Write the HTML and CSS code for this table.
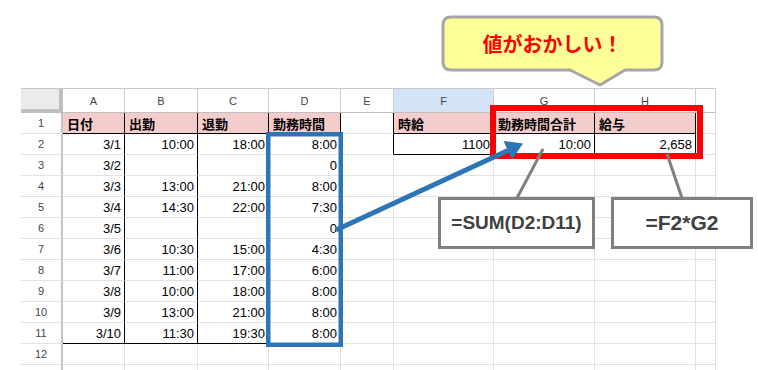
FILE: index.html
```html
<!DOCTYPE html>
<html lang="ja">
<head>
<meta charset="utf-8">
<title>勤務時間</title>
<link rel="stylesheet" href="styles.css">
</head>
<body>
<div class="sheet">
  <div class="corner"></div>
  <div class="ch">A</div><div class="ch">B</div><div class="ch">C</div><div class="ch">D</div><div class="ch">E</div><div class="ch sel">F</div><div class="ch">G</div><div class="ch">H</div><div class="ch"></div>

  <div class="rh">1</div>
  <div class="c hd bR bB">日付</div><div class="c hd bR bB">出勤</div><div class="c hd bR bB">退勤</div><div class="c hd bR bB">勤務時間</div><div class="c bR"></div><div class="c hd bR bB">時給</div><div class="c hd bR bB">勤務時間合計</div><div class="c hd bR bB">給与</div><div class="c"></div>

  <div class="rh">2</div>
  <div class="c r bR">3/1</div><div class="c r bR">10:00</div><div class="c r bR">18:00</div><div class="c r bR">8:00</div><div class="c bR"></div><div class="c r bR bB">1100</div><div class="c r bR bB">10:00</div><div class="c r bR bB">2,658</div><div class="c"></div>

  <div class="rh">3</div>
  <div class="c r bR">3/2</div><div class="c r bR"></div><div class="c r bR"></div><div class="c r bR">0</div><div class="c"></div><div class="c"></div><div class="c"></div><div class="c"></div><div class="c"></div>

  <div class="rh">4</div>
  <div class="c r bR">3/3</div><div class="c r bR">13:00</div><div class="c r bR">21:00</div><div class="c r bR">8:00</div><div class="c"></div><div class="c"></div><div class="c"></div><div class="c"></div><div class="c"></div>

  <div class="rh">5</div>
  <div class="c r bR">3/4</div><div class="c r bR">14:30</div><div class="c r bR">22:00</div><div class="c r bR">7:30</div><div class="c"></div><div class="c"></div><div class="c"></div><div class="c"></div><div class="c"></div>

  <div class="rh">6</div>
  <div class="c r bR">3/5</div><div class="c r bR"></div><div class="c r bR"></div><div class="c r bR">0</div><div class="c"></div><div class="c"></div><div class="c"></div><div class="c"></div><div class="c"></div>

  <div class="rh">7</div>
  <div class="c r bR">3/6</div><div class="c r bR">10:30</div><div class="c r bR">15:00</div><div class="c r bR">4:30</div><div class="c"></div><div class="c"></div><div class="c"></div><div class="c"></div><div class="c"></div>

  <div class="rh">8</div>
  <div class="c r bR">3/7</div><div class="c r bR">11:00</div><div class="c r bR">17:00</div><div class="c r bR">6:00</div><div class="c"></div><div class="c"></div><div class="c"></div><div class="c"></div><div class="c"></div>

  <div class="rh">9</div>
  <div class="c r bR">3/8</div><div class="c r bR">10:00</div><div class="c r bR">18:00</div><div class="c r bR">8:00</div><div class="c"></div><div class="c"></div><div class="c"></div><div class="c"></div><div class="c"></div>

  <div class="rh">10</div>
  <div class="c r bR">3/9</div><div class="c r bR">13:00</div><div class="c r bR">21:00</div><div class="c r bR">8:00</div><div class="c"></div><div class="c"></div><div class="c"></div><div class="c"></div><div class="c"></div>

  <div class="rh">11</div>
  <div class="c r bR bB">3/10</div><div class="c r bR bB">11:30</div><div class="c r bR bB">19:30</div><div class="c r bR bB">8:00</div><div class="c"></div><div class="c"></div><div class="c"></div><div class="c"></div><div class="c"></div>

  <div class="rh">12</div>
  <div class="c"></div><div class="c"></div><div class="c"></div><div class="c"></div><div class="c"></div><div class="c"></div><div class="c"></div><div class="c"></div><div class="c"></div>

  <div class="rh"></div>
  <div class="c"></div><div class="c"></div><div class="c"></div><div class="c"></div><div class="c"></div><div class="c"></div><div class="c"></div><div class="c"></div><div class="c"></div>
</div>

<svg class="overlay" width="758" height="370" viewBox="0 0 758 370">
  <path d="M451,17 H654 Q662,17 662,25 V62 Q662,70 654,70 H625 L600,85 L570,70 H451 Q443,70 443,62 V25 Q443,17 451,17 Z" fill="#ffff99" stroke="#a6a6a6" stroke-width="3" stroke-linejoin="round"/>
  <rect x="268.25" y="134.25" width="72.5" height="210.5" fill="none" stroke="#2e75b6" stroke-width="4.5"/>
  <rect x="493" y="108" width="207" height="48" fill="none" stroke="#ff0000" stroke-width="6"/>
  <line x1="336" y1="230" x2="508" y2="150.5" stroke="#2e75b6" stroke-width="5"/>
  <polygon points="523,143.5 512,159.5 503.5,141" fill="#2e75b6"/>
  <line x1="517" y1="198" x2="543" y2="149" stroke="#808080" stroke-width="3"/>
  <line x1="682" y1="198" x2="667" y2="154" stroke="#808080" stroke-width="3"/>
</svg>

<div class="callout">値がおかしい！</div>
<div class="note note-sum">=SUM(D2:D11)</div>
<div class="note note-mul">=F2*G2</div>
</body>
</html>
```

FILE: styles.css
```css
html, body {
  margin: 0;
  padding: 0;
}
body {
  position: relative;
  width: 758px;
  height: 370px;
  overflow: hidden;
  background: #ffffff;
  font-family: "Liberation Sans", "Noto Sans CJK JP", Arial, sans-serif;
  font-size: 13px;
  color: #000;
}
.sheet {
  margin: 88px 0 0 21px;
  display: grid;
  grid-template-columns: 42px 62px 73px 71px 72px 53px 100px 101px 101px 20px;
  grid-template-rows: 24px;
  grid-auto-rows: 21px;
  width: 695px;
  border-top: 1px solid #c8c8c8;
}
.sheet > div {
  box-sizing: border-box;
  border-right: 1px solid #e2e2e2;
  border-bottom: 1px solid #e2e2e2;
  display: flex;
  align-items: center;
  overflow: hidden;
  white-space: nowrap;
}
.sheet > .corner {
  background: #ebebeb;
  border-right: 4px solid #c0c0c0;
  border-bottom: 4px solid #c0c0c0;
}
.sheet > .ch {
  justify-content: center;
  font-size: 11px;
  color: #444;
  border-right-color: #d0d0d0;
  border-bottom-color: #c0c0c0;
}
.sheet > .ch.sel {
  background: #d3e3f8;
}
.sheet > .rh {
  justify-content: center;
  font-size: 11px;
  color: #444;
  border-right: 2px solid #c4c4c4;
  border-bottom-color: #e2e2e2;
}
.sheet > .c {
  padding: 0 3px;
}
.sheet > .r {
  justify-content: flex-end;
}
.sheet > .hd {
  background: #f4cccc;
  font-weight: bold;
  padding-left: 4px;
}
.sheet > .bR {
  border-right-color: #000;
}
.sheet > .bB {
  border-bottom-color: #000;
}
.overlay {
  position: absolute;
  left: 0;
  top: 0;
  pointer-events: none;
}
.callout {
  position: absolute;
  left: 443px;
  top: 17px;
  width: 219px;
  height: 53px;
  display: flex;
  align-items: center;
  justify-content: center;
  font-family: "Noto Sans CJK JP", sans-serif;
  font-weight: bold;
  font-size: 20px;
  color: #ff0000;
}
.note {
  position: absolute;
  top: 197px;
  height: 52px;
  box-sizing: border-box;
  border: 3px solid #7f7f7f;
  background: #fff;
  display: flex;
  align-items: center;
  justify-content: center;
  font-family: "Liberation Sans", Arial, sans-serif;
  font-weight: bold;
  color: #404040;
}
.note-sum {
  left: 438px;
  width: 157px;
  font-size: 19px;
}
.note-mul {
  left: 611px;
  width: 142px;
  font-size: 21px;
}
```
